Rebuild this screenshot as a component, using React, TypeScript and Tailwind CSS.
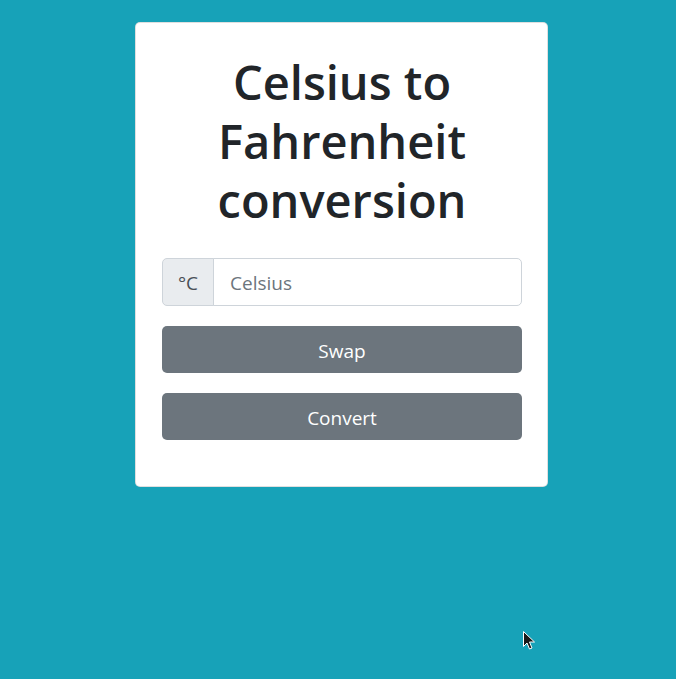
export default function App() {
  return (
    <div
      className="relative h-[679px] w-full overflow-hidden bg-[#17a2b8] pt-[22px] pl-[135px]"
      style={{ fontFamily: '"Segoe UI", "Open Sans", "Noto Sans", sans-serif' }}
    >
      <div className="flex w-[413px] flex-col rounded-[5px] border border-[rgba(0,0,0,0.125)] bg-white pl-[26px] pr-[25px] pt-[30px] pb-[46px]">
        <h1 className="text-center text-[47px] leading-[59px] font-semibold text-[#212529]">
          Celsius to Fahrenheit conversion
        </h1>
        <div className="mt-[28px] flex h-[48px]">
          <div className="flex w-[52px] items-center justify-center rounded-l-[5px] border border-[#ced4da] bg-[#e9ecef] pt-[3px] text-[19px] text-[#495057]">
            °C
          </div>
          <input
            placeholder="Celsius"
            className="-ml-px min-w-0 flex-1 rounded-r-[5px] border border-[#ced4da] px-4 pt-[3px] text-[19px] text-[#495057] outline-none placeholder:text-[#6c757d]"
          />
        </div>
        <button className="mt-[20px] h-[47px] rounded-[5px] bg-[#6c757d] pt-[3px] text-[19px] text-white">
          Swap
        </button>
        <button className="mt-[20px] h-[47px] rounded-[5px] bg-[#6c757d] pt-[3px] text-[19px] text-white">
          Convert
        </button>
      </div>
      <svg
        className="absolute left-[523px] top-[631px]"
        width="13"
        height="20"
        viewBox="0 0 13 20"
      >
        <path
          d="M0.5 0.5 L0.5 15.5 L4 12 L6.5 18 L9 17 L6.5 11 L11.5 11 Z"
          fill="#1a1a1a"
          stroke="#ffffff"
          strokeWidth="1"
        />
      </svg>
    </div>
  );
}
